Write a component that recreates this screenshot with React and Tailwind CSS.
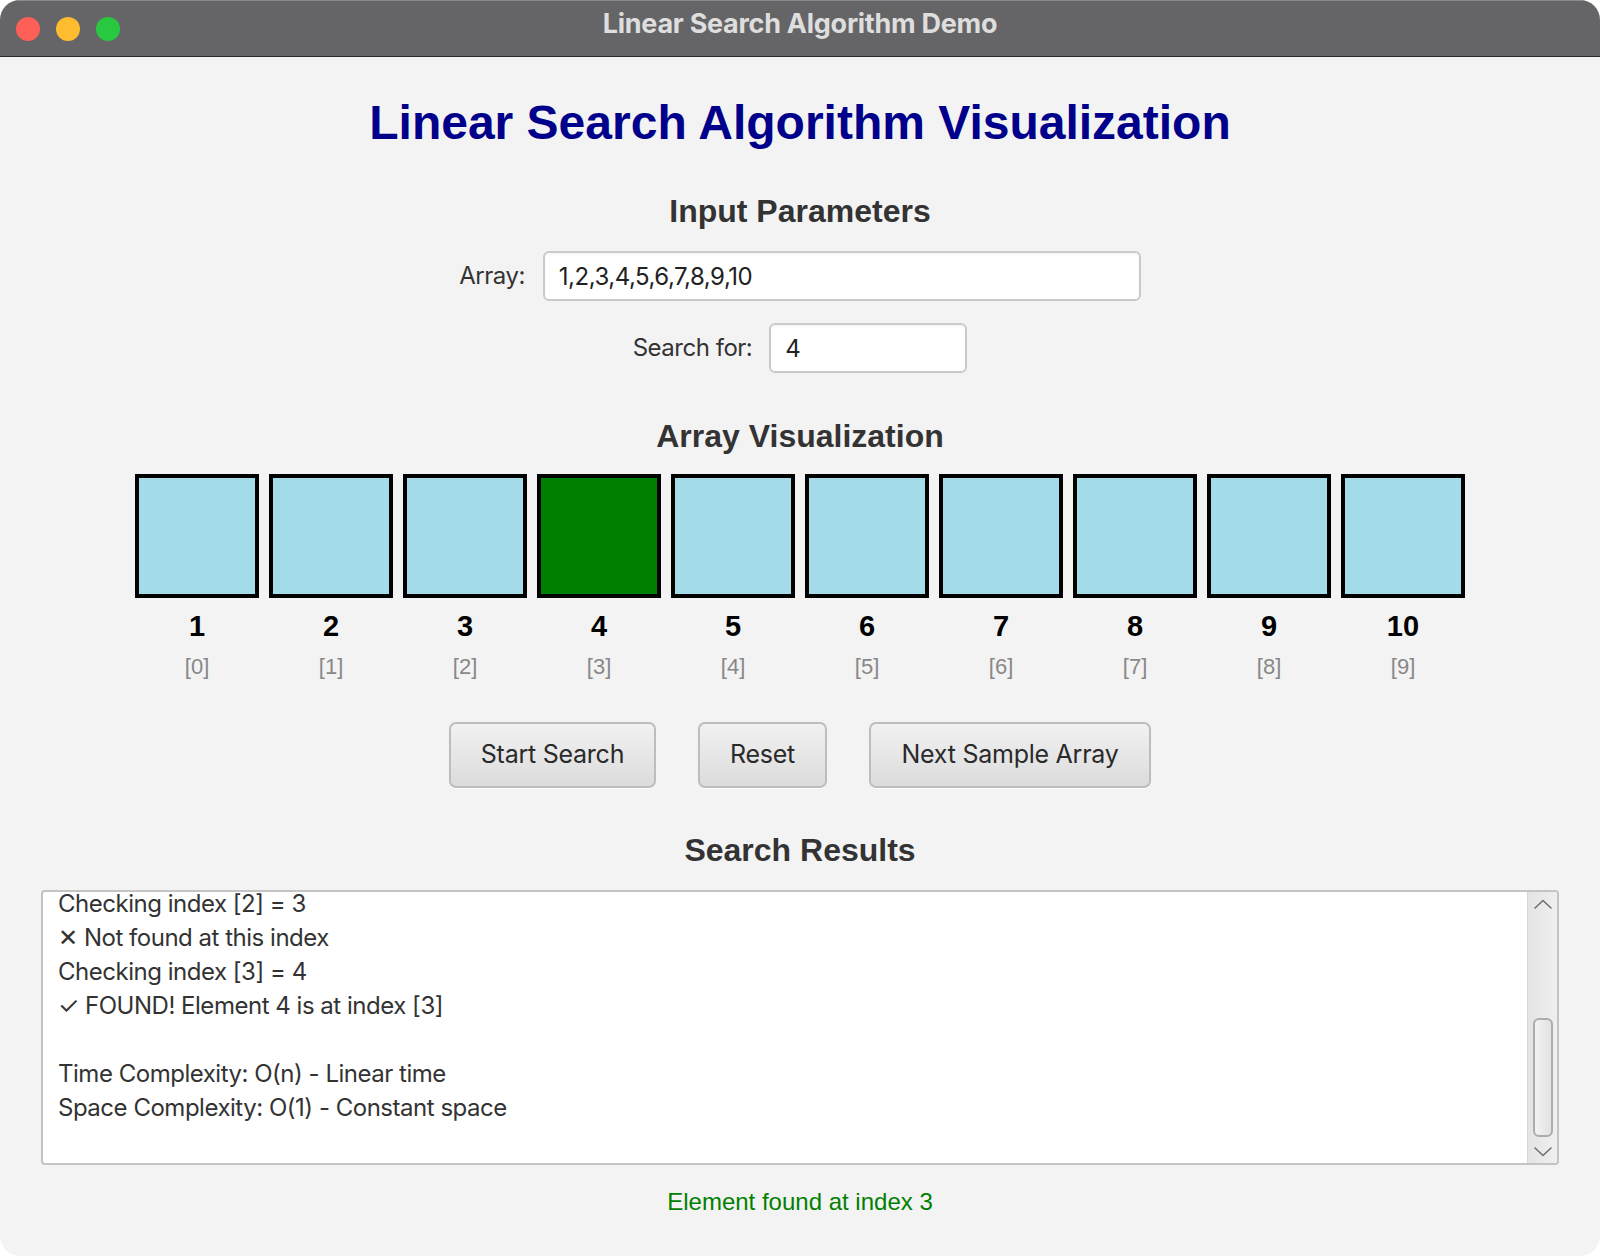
import React from 'react';

const values = [1, 2, 3, 4, 5, 6, 7, 8, 9, 10];
const foundIndex = 3;

const logLines = [
  'Checking index [2] = 3',
  '\u2715 Not found at this index',
  'Checking index [3] = 4',
  '\u2713 FOUND! Element 4 is at index [3]',
  '',
  'Time Complexity: O(n) - Linear time',
  'Space Complexity: O(1) - Constant space',
];

const sans = "font-['Liberation_Sans',Arial,sans-serif]";
const ui = "font-['Inter','Noto_Sans','DejaVu_Sans',sans-serif]";

function Chevron({ up }) {
  return (
    <svg width="18" height="10" viewBox="0 0 18 10" fill="none">
      <path
        d={up ? 'M1 9 L9 1.5 L17 9' : 'M1 1 L9 8.5 L17 1'}
        stroke="#707070"
        strokeWidth="1.6"
        strokeLinecap="round"
        strokeLinejoin="round"
      />
    </svg>
  );
}

function Button({ label, width }) {
  return (
    <button
      className={`${ui} h-[66px] ${width} rounded-[7px] border-2 border-[#bdbdbd] bg-gradient-to-b from-[#f1f1f1] to-[#dcdcdc] text-[25px] tracking-[-0.01em] text-[#2a2a2a] shadow-[0_1px_0_#ffffff]`}
    >
      {label}
    </button>
  );
}

export default function App() {
  return (
    <div className="h-screen w-full bg-white">
      <div className="flex h-[1256px] w-full flex-col overflow-hidden rounded-[20px] bg-[#f3f3f3]">
        {/* title bar */}
        <div className="grid h-[57px] shrink-0 grid-cols-[1fr_auto_1fr] items-center border-t border-t-[#8a8a8a] border-b border-b-[#2c2c2c] bg-[#656567] pb-[8px]">
          <div className="flex items-center gap-[16px] pl-[16px] pt-[8px]">
            <span className="h-[24px] w-[24px] rounded-full bg-[#fe5f57]" />
            <span className="h-[24px] w-[24px] rounded-full bg-[#febc2e]" />
            <span className="h-[24px] w-[24px] rounded-full bg-[#28c840]" />
          </div>
          <div className={`${ui} text-[27px] font-bold tracking-[-0.01em] text-[#dedede]`}>
            Linear Search Algorithm Demo
          </div>
          <div />
        </div>

        <div className="flex flex-1 flex-col items-center">
          <h1 className={`${sans} mt-[42px] text-[48px] font-bold leading-[48px] text-[#00008b]`}>
            Linear Search Algorithm Visualization
          </h1>

          <h2 className={`${sans} mt-[48px] text-[32px] font-bold leading-[32px] text-[#333333]`}>
            Input Parameters
          </h2>

          <div className="mt-[24px] flex items-center gap-[18px]">
            <label className={`${ui} text-[24px] tracking-[-0.02em] text-[#333333]`}>Array:</label>
            <input
              readOnly
              value="1,2,3,4,5,6,7,8,9,10"
              className={`${ui} h-[50px] w-[598px] rounded-[6px] border-2 border-[#cacaca] bg-white px-[14px] text-[24px] tracking-[-0.02em] text-[#222222] shadow-[inset_0_2px_2px_rgba(0,0,0,0.04)] outline-none`}
            />
          </div>

          <div className="mt-[22px] flex items-center gap-[17px]">
            <label className={`${ui} text-[24px] tracking-[-0.02em] text-[#333333]`}>Search for:</label>
            <input
              readOnly
              value="4"
              className={`${ui} h-[50px] w-[198px] rounded-[6px] border-2 border-[#cacaca] bg-white px-[14px] text-[24px] text-[#222222] shadow-[inset_0_2px_2px_rgba(0,0,0,0.04)] outline-none`}
            />
          </div>

          <h2 className={`${sans} mt-[47px] text-[32px] font-bold leading-[32px] text-[#333333]`}>
            Array Visualization
          </h2>

          <div className="mt-[22px] flex gap-[10px]">
            {values.map((v, i) => (
              <div key={i} className="flex flex-col items-center">
                <div
                  className={`h-[124px] w-[124px] border-4 border-black ${
                    i === foundIndex ? 'bg-[#008000]' : 'bg-[#a3dbe9]'
                  }`}
                />
                <div className={`${sans} mt-[14px] text-[29px] font-bold leading-[28px] text-black`}>{v}</div>
                <div className={`${sans} mt-[16px] text-[22px] leading-[22px] text-[#888888]`}>[{i}]</div>
              </div>
            ))}
          </div>

          <div className="mt-[44px] flex gap-[42px]">
            <Button label="Start Search" width="w-[207px]" />
            <Button label="Reset" width="w-[129px]" />
            <Button label="Next Sample Array" width="w-[282px]" />
          </div>

          <h2 className={`${sans} mt-[46px] text-[32px] font-bold leading-[32px] text-[#333333]`}>
            Search Results
          </h2>

          {/* results text area */}
          <div className="mx-[41px] mt-[24px] flex h-[275px] self-stretch overflow-hidden rounded-[4px] border-2 border-[#c4c4c4] bg-white">
            <div className="flex-1 overflow-hidden pl-[15px]">
              <div className={`${ui} -mt-[5px] text-[24px] leading-[34px] tracking-[-0.02em] text-[#333333]`}>
                {logLines.map((line, i) => (
                  <div key={i} className="h-[34px] whitespace-pre">
                    {line}
                  </div>
                ))}
              </div>
            </div>
            <div className="flex w-[30px] flex-col border-l border-[#d6d6d6] bg-gradient-to-r from-[#e4e4e4] to-[#efefef]">
              <div className="flex h-[24px] items-center justify-center">
                <Chevron up />
              </div>
              <div className="flex flex-1 flex-col justify-end pb-[3px]">
                <div className="mx-auto h-[119px] w-[20px] rounded-[6px] border-2 border-[#acacac] bg-gradient-to-r from-[#f2f2f2] to-[#e2e2e2]" />
              </div>
              <div className="flex h-[23px] items-center justify-center">
                <Chevron />
              </div>
            </div>
          </div>

          <div className={`${sans} mt-[25px] text-[24px] leading-[24px] text-[#008000]`}>
            Element found at index 3
          </div>
        </div>
      </div>
    </div>
  );
}
